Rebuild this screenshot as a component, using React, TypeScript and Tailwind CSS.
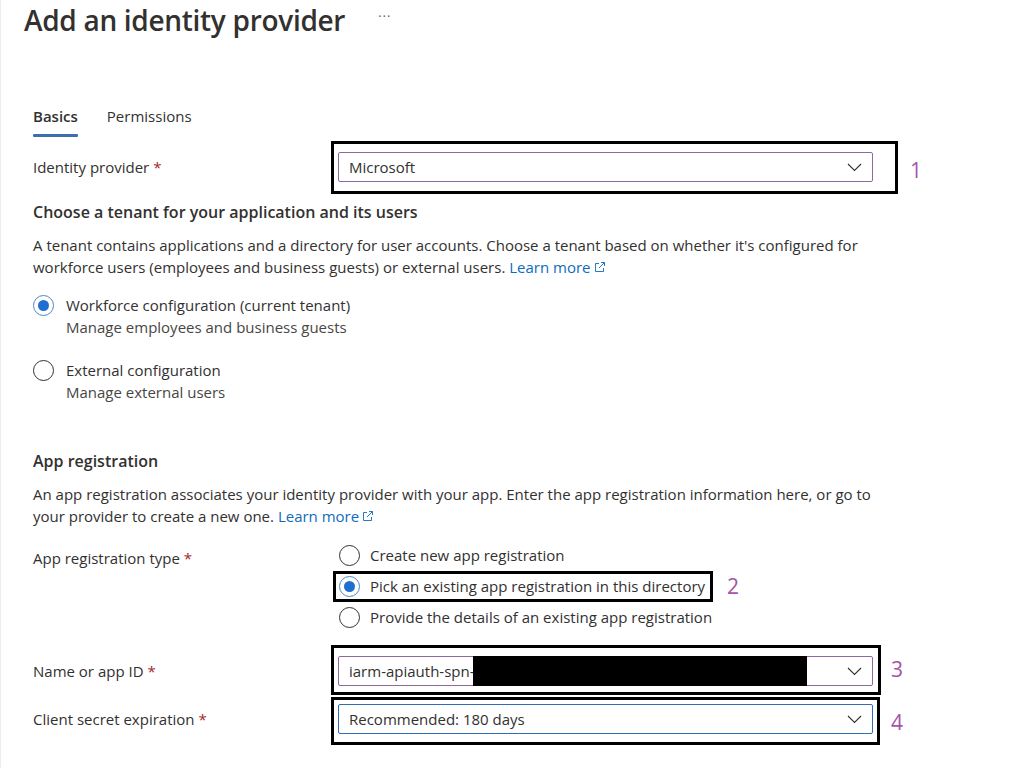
import React from "react";

const FONT = { fontFamily: '"Open Sans", "Noto Sans", sans-serif' };

function Chevron() {
  return (
    <svg width="15" height="9" viewBox="0 0 15 9" className="shrink-0">
      <polyline points="1,1 7.5,7.5 14,1" fill="none" stroke="#323130" strokeWidth="1.1" />
    </svg>
  );
}

function ExtIcon() {
  return (
    <svg width="12" height="12" viewBox="0 0 12 12" className="inline-block ml-[3px] -mt-[3px]">
      <path d="M5 2.5H1.5v8h8V7" fill="none" stroke="#0f6cbd" strokeWidth="0.9" />
      <path d="M7 1.5h3.5V5M10.5 1.5L5 7" fill="none" stroke="#0f6cbd" strokeWidth="0.9" />
    </svg>
  );
}

function Radio({ checked }: { checked?: boolean }) {
  return checked ? (
    <span className="flex w-[21px] h-[21px] rounded-full border border-[#4f86c6] items-center justify-center shrink-0 bg-white">
      <span className="block w-[11px] h-[11px] rounded-full bg-[#1f6fd1]" />
    </span>
  ) : (
    <span className="block w-[21px] h-[21px] rounded-full border border-[#323130] shrink-0 bg-white" />
  );
}

function Num({ children }: { children: React.ReactNode }) {
  return <span className="text-[21px] leading-none text-[#a553a8]">{children}</span>;
}

function Req({ children }: { children: React.ReactNode }) {
  return (
    <span>
      {children} <span className="text-[#a4262c]">*</span>
    </span>
  );
}

export default function App() {
  return (
    <div className="w-[1014px] h-[768px] bg-white text-[#323130] border-l border-[#ececec] overflow-hidden text-[15px]" style={FONT}>
      <div className="pl-[23px] flex items-center h-[40px]">
        <h1 className="text-[28px] font-semibold leading-[40px] tracking-[-0.3px]">Add an identity provider</h1>
        <span className="ml-[33px] text-[13px] text-[#605e5c] tracking-[1px] -mt-[6px]">···</span>
      </div>

      <div className="pl-[32px]">
        {/* Tabs */}
        <div className="mt-[66px] flex gap-[29px] text-[15px]">
          <div className="flex flex-col">
            <span className="leading-[20px] font-semibold">Basics</span>
            <span className="block mt-[8px] h-[3px] bg-[#3a6fb0] rounded-[1px]" />
          </div>
          <span className="leading-[20px]">Permissions</span>
        </div>

        {/* Identity provider */}
        <div className="mt-[15px] flex items-center">
          <div className="w-[305px] leading-[22px]"><Req>Identity provider</Req></div>
          <div className="relative">
            <div className="w-[535px] h-[30px] border border-[#8e6a9c] rounded-[2px] flex items-center justify-between pl-[10px] pr-[10px]">
              <span>Microsoft</span>
              <Chevron />
            </div>
            <div className="absolute -left-[7px] -top-[11px] -right-[25px] -bottom-[12px] border-[3px] border-black pointer-events-none" />
            <div className="absolute left-[572px] top-[8px]"><Num>1</Num></div>
          </div>
        </div>

        {/* Tenant */}
        <h2 className="mt-[19px] text-[16px] font-semibold leading-[22px]">Choose a tenant for your application and its users</h2>
        <p className="mt-[11px] leading-[22px] whitespace-nowrap">
          A tenant contains applications and a directory for user accounts. Choose a tenant based on whether it's configured for
          <br />
          workforce users (employees and business guests) or external users. <span className="text-[#0f6cbd]">Learn more</span>
          <ExtIcon />
        </p>

        <div className="mt-[16px] flex gap-[12px]">
          <div className="pt-[1px]"><Radio checked /></div>
          <div className="leading-[22px]">
            <div>Workforce configuration (current tenant)</div>
            <div className="text-[#484644]">Manage employees and business guests</div>
          </div>
        </div>
        <div className="mt-[21px] flex gap-[12px]">
          <div className="pt-[1px]"><Radio /></div>
          <div className="leading-[22px]">
            <div>External configuration</div>
            <div className="text-[#484644]">Manage external users</div>
          </div>
        </div>

        {/* App registration */}
        <h2 className="mt-[47px] text-[16px] font-semibold leading-[22px]">App registration</h2>
        <p className="mt-[11px] leading-[22px] whitespace-nowrap">
          An app registration associates your identity provider with your app. Enter the app registration information here, or go to
          <br />
          your provider to create a new one. <span className="text-[#0f6cbd]">Learn more</span>
          <ExtIcon />
        </p>

        <div className="mt-[13px] flex">
          <div className="w-[306px] pt-[7px] leading-[22px]"><Req>App registration type</Req></div>
          <div className="flex flex-col">
            <div className="h-[31px] flex items-center gap-[10px]">
              <Radio />
              <span>Create new app registration</span>
            </div>
            <div className="relative h-[31px] flex items-center gap-[10px]">
              <Radio checked />
              <span>Pick an existing app registration in this directory</span>
              <div className="absolute -left-[6px] top-0 w-[380px] h-[31px] border-[3px] border-black pointer-events-none" />
              <div className="absolute left-[388px] top-[5px]"><Num>2</Num></div>
            </div>
            <div className="h-[31px] flex items-center gap-[10px]">
              <Radio />
              <span>Provide the details of an existing app registration</span>
            </div>
          </div>
        </div>

        {/* Name or app ID */}
        <div className="mt-[23px] flex items-center">
          <div className="w-[305px] leading-[22px]"><Req>Name or app ID</Req></div>
          <div className="relative">
            <div className="w-[535px] h-[30px] border border-[#8e6a9c] rounded-[2px] flex items-center justify-between pl-[10px] pr-[10px]">
              <span>iarm-apiauth-spn-</span>
              <Chevron />
            </div>
            <div className="absolute left-[135px] top-0 w-[334px] h-[30px] bg-black" />
            <div className="absolute -left-[7px] -top-[11px] -right-[8px] -bottom-[9px] border-[3px] border-black pointer-events-none" />
            <div className="absolute left-[553px] top-[3px]"><Num>3</Num></div>
          </div>
        </div>

        {/* Client secret expiration */}
        <div className="mt-[18px] flex items-center">
          <div className="w-[305px] leading-[22px]"><Req>Client secret expiration</Req></div>
          <div className="relative">
            <div className="w-[535px] h-[30px] border border-[#2f6db5] rounded-[2px] flex items-center justify-between pl-[10px] pr-[10px]">
              <span>Recommended: 180 days</span>
              <Chevron />
            </div>
            <div className="absolute -left-[7px] -top-[7px] -right-[7px] -bottom-[11px] border-[3px] border-black pointer-events-none" />
            <div className="absolute left-[553px] top-[8px]"><Num>4</Num></div>
          </div>
        </div>
      </div>
    </div>
  );
}
